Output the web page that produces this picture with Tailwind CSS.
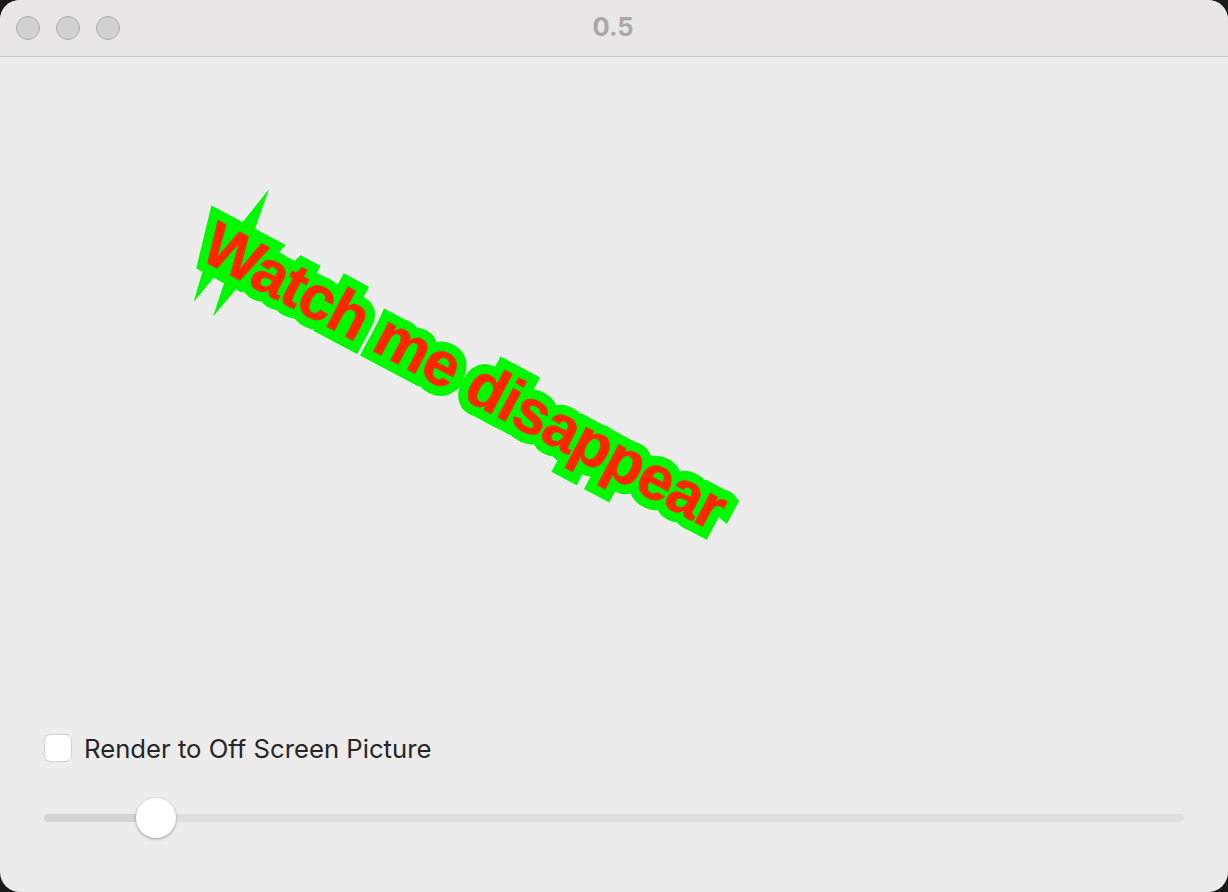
<!DOCTYPE html>
<html><head><meta charset="utf-8"><script src="https://cdn.jsdelivr.net/npm/@tailwindcss/browser@4"></script></head>
<body class="bg-[#1a1a1a] w-[1228px] h-[892px] overflow-hidden">
<div class="w-[1228px] h-[892px] flex flex-col rounded-[20px] overflow-hidden bg-[#ececec]">
  <header class="relative h-[57px] shrink-0 flex items-center bg-[#e8e7e5] border-b border-[#c8c8c8] pl-4 gap-4">
    <span class="w-6 h-6 rounded-full bg-[#d1d1cf] border border-[#adadab]"></span>
    <span class="w-6 h-6 rounded-full bg-[#d1d1cf] border border-[#adadab]"></span>
    <span class="w-6 h-6 rounded-full bg-[#d1d1cf] border border-[#adadab]"></span>
    <span class="absolute inset-x-0 top-[11px] -ml-[2px] text-center text-[25.5px] leading-[32px] font-bold text-[#a8a8a8] font-['Inter',sans-serif]">0.5</span>
  </header>
  <main class="flex-1 flex flex-col min-h-0 px-11">
    <div class="relative flex-1 -mx-11">
      <svg class="absolute inset-0" width="1228" height="677" viewBox="0 57 1228 677">
        <use href="#wm" stroke="#00f900" stroke-width="20" stroke-miterlimit="10" stroke-linejoin="miter"></use>
        <g stroke="#ff2600" stroke-width="0.8">
          <text id="wm" transform="translate(198 258) rotate(28)" font-family="Liberation Sans" font-weight="700" font-size="62" letter-spacing="-1.05" fill="#ff2600">Watch me disappear</text>
        </g>
      </svg>
    </div>
    <label class="flex items-center gap-3 h-7">
      <span class="w-7 h-7 rounded-[7px] bg-white border border-[#d2d2d2]"></span>
      <span class="text-[25.7px] leading-7 pt-[2px] text-[#262626] font-['Inter',sans-serif]">Render to Off Screen Picture</span>
    </label>
    <div class="relative mt-[36px] mb-[54px] h-[40px] flex items-center">
      <div class="w-full h-2 rounded-full bg-[#dfdfdf] overflow-hidden"><div class="w-[112px] h-full bg-[#d2d2d2]"></div></div>
      <div class="absolute left-[92px] top-0 w-10 h-10 rounded-full bg-white shadow-[0_1px_3px_rgba(0,0,0,0.35)]"></div>
    </div>
  </main>
</div>
</body></html>
